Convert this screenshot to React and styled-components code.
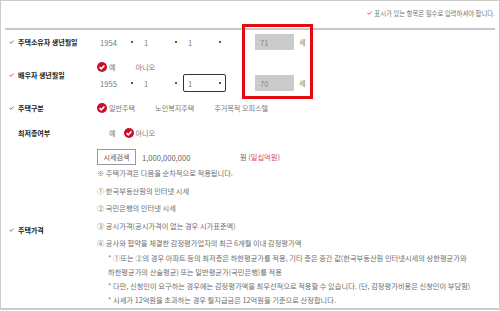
import React from 'react';
import styled, { createGlobalStyle } from 'styled-components';

const GlobalStyle = createGlobalStyle`
  html, body {
    margin: 0;
    padding: 0;
    background: #fff;
  }
  body {
    font-family: 'Noto Sans CJK KR', 'Noto Sans', sans-serif;
  }
`;

const RED = '#c8102e';

const Check = () => (
   <svg width="5" height="4" viewBox="0 0 5 4">
      <path d="M0.4 1.9 L1.9 3.4 L4.6 0.5" fill="none" stroke="#d9364f" strokeWidth="0.9" />
   </svg>
);

const Radio = ({ checked, children }) => (
   <Option>
      <RadioMark checked={checked}>
         {checked && (
            <svg width="10" height="10" viewBox="0 0 10 10">
               <path d="M2.6 5.1 L4.3 6.8 L7.4 3.4" fill="none" stroke="#fff" strokeWidth="1.5" />
            </svg>
         )}
      </RadioMark>
      {children}
   </Option>
);

const Select = ({ value, focused }) => (
   <SelectBox focused={focused}>
      <span>{value}</span>
      <Dot />
   </SelectBox>
);

const DateRow = ({ year, month, day, focusDay, age }) => (
   <Line>
      <Selects>
         <Select value={year} />
         <Select value={month} />
         <Select value={day} focused={focusDay} />
      </Selects>
      <AgeGroup>
         <AgeBox>{age}</AgeBox>
         <span>세</span>
      </AgeGroup>
   </Line>
);

const App = () => {
   return (
      <>
         <GlobalStyle />
         <Frame>
            <Notice>
               <Check />
               <span>표시가 있는 항목은 필수로 입력하셔야 합니다.</span>
            </Notice>
            <Divider />

            <Row height={24}>
               <Label required>주택소유자 생년월일</Label>
               <Content>
                  <DateRow year="1954" month="1" day="1" age="71" />
               </Content>
            </Row>

            <Row height={42}>
               <Label required>배우자 생년월일</Label>
               <Content column pad="6px 0 4px">
                  <Options>
                     <Radio checked>예</Radio>
                     <Radio>아니오</Radio>
                  </Options>
                  <DateRow year="1955" month="1" day="1" focusDay age="70" />
               </Content>
            </Row>

            <Row height={24}>
               <Label required>주택구분</Label>
               <Content>
                  <Options>
                     <Radio checked>일반주택</Radio>
                     <Radio>노인복지주택</Radio>
                     <Radio>주거목적 오피스텔</Radio>
                  </Options>
               </Content>
            </Row>

            <Row height={25}>
               <Label>최저층여부</Label>
               <Content>
                  <Options>
                     <Radio>예</Radio>
                     <Radio checked>아니오</Radio>
                  </Options>
               </Content>
            </Row>

            <Row>
               <Label required offset={8}>주택가격</Label>
               <Content column pad="4px 0 0">
                  <PriceLine>
                     <SearchButton>시세검색</SearchButton>
                     <PriceValue>1,000,000,000</PriceValue>
                     <span>
                        원 (<Won>일십억원</Won>)
                     </span>
                  </PriceLine>
                  <Guide>
                     <GuideItem>※ 주택가격은 다음을 순차적으로 적용됩니다.</GuideItem>
                     <GuideItem>① 한국부동산원의 인터넷 시세</GuideItem>
                     <GuideItem>② 국민은행의 인터넷 시세</GuideItem>
                     <GuideItem>③ 공시가격(공시가격이 없는 경우 시가표준액)</GuideItem>
                     <GuideItem>④ 공사와 협약을 체결한 감정평가업자의 최근 6개월 이내 감정평가액</GuideItem>
                  </Guide>
                  <Notes>
                     <NoteLine>
                        * ①또는 ②의 경우 아파트 등의 최저층은 하한평균가를 적용, 기타 층은 중간 값(한국부동산원 인터넷시세의 상한평균가와
                     </NoteLine>
                     <NoteLine>하한평균가의 산술평균) 또는 일반평균가(국민은행)를 적용</NoteLine>
                     <NoteLine>
                        * 다만, 신청인이 요구하는 경우에는 감정평가액을 최우선적으로 적용할 수 있습니다. (단, 감정평가비용은 신청인이 부담함)
                     </NoteLine>
                     <NoteLine>* 시세가 12억원을 초과하는 경우 월지급금은 12억원을 기준으로 산정합니다.</NoteLine>
                  </Notes>
               </Content>
            </Row>

            <Highlight />
         </Frame>
      </>
   );
};

const LabelBase = ({ required, children, className }) => (
   <div className={className}>
      <CheckSlot>{required && <Check />}</CheckSlot>
      <span>{children}</span>
   </div>
);

const Frame = styled.div`
   position: relative;
   width: 500px;
   height: 310px;
   box-sizing: border-box;
   border: 1px solid #cccccc;
   border-bottom-width: 2px;
   overflow: hidden;
   color: #6e6e6e;
`;

const Notice = styled.div`
   display: flex;
   justify-content: flex-end;
   align-items: center;
   gap: 2px;
   height: 24px;
   padding-right: 4px;
   font-size: 6.4px;
   color: #777;
`;

const Divider = styled.div`
   height: 2px;
   margin: 3px 4px 0;
   background: #c8c8c8;
`;

const Row = styled.div`
   display: grid;
   grid-template-columns: 94px 1fr;
   height: ${(props) => (props.height ? props.height + 'px' : 'auto')};
`;

const Label = styled(LabelBase)`
   display: flex;
   align-items: center;
   gap: 4px;
   padding-left: 8px;
   padding-top: ${(props) => props.offset || 0}px;
   font-size: 7px;
   font-weight: 700;
   color: #222;
   white-space: nowrap;
`;

const CheckSlot = styled.span`
   display: inline-flex;
   width: 5px;
`;

const Content = styled.div`
   display: flex;
   flex-direction: ${(props) => (props.column ? 'column' : 'row')};
   align-items: ${(props) => (props.column ? 'stretch' : 'center')};
   padding: ${(props) => props.pad || 0};
   font-size: 7.25px;
`;

const Line = styled.div`
   display: flex;
   align-items: center;
   height: 18px;
`;

const Selects = styled.div`
   display: flex;
   gap: 1px;
`;

const SelectBox = styled.div`
   display: flex;
   align-items: center;
   justify-content: space-between;
   width: 43px;
   height: 18px;
   box-sizing: border-box;
   padding: 0 4px;
   border: 1px solid ${(props) => (props.focused ? '#333' : 'transparent')};
   border-radius: 2px;
   font-size: 7.6px;
   color: #777;
`;

const Dot = styled.span`
   width: 2px;
   height: 2px;
   border-radius: 50%;
   background: #222;
`;

const AgeGroup = styled.div`
   display: flex;
   align-items: center;
   gap: 5px;
   margin-left: 29px;
   font-size: 7px;
   color: #777;
`;

const AgeBox = styled.div`
   display: flex;
   align-items: center;
   width: 39px;
   height: 16px;
   box-sizing: border-box;
   padding-left: 5px;
   background: #cbcbcb;
   font-size: 7.6px;
   color: #8a8a8a;
`;

const Options = styled.div`
   display: flex;
   align-items: center;
   gap: 8px;
   height: 14px;
   margin-left: 2px;
`;

const Option = styled.label`
   display: inline-flex;
   align-items: center;
   gap: 2px;
   font-size: 7.1px;
   color: #777;
`;

const RadioMark = styled.span`
   display: inline-flex;
   width: 10px;
   height: 10px;
   border-radius: 50%;
   background: ${(props) => (props.checked ? RED : 'transparent')};
`;

const PriceLine = styled.div`
   display: flex;
   align-items: center;
   height: 16px;
   margin-left: 2px;
   color: #666;
`;

const SearchButton = styled.button`
   width: 39px;
   height: 16px;
   padding: 0;
   border: 1px solid #999;
   background: #fff;
   font-family: inherit;
   font-size: 7px;
   color: #555;
`;

const PriceValue = styled.span`
   width: 98px;
   margin-left: 6px;
   font-size: 7.6px;
   color: #666;
`;

const Won = styled.span`
   color: #e3425a;
`;

const Guide = styled.div`
   margin-left: 2px;
`;

const GuideItem = styled.div`
   line-height: 17.5px;
   white-space: nowrap;
`;

const Notes = styled.div`
   margin: -2px 0 0 13px;
`;

const NoteLine = styled.div`
   line-height: 14px;
   white-space: nowrap;
`;

const Highlight = styled.div`
   position: absolute;
   left: 241px;
   top: 23px;
   width: 71px;
   height: 75px;
   box-sizing: border-box;
   border: 3px solid #e50914;
   pointer-events: none;
`;

export default App;
